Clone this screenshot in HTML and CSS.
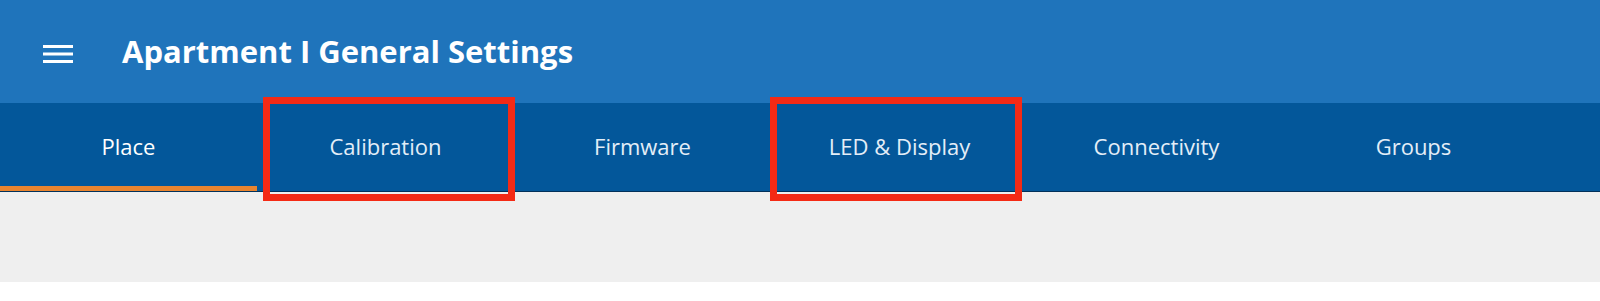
FILE: index.html
```html
<!DOCTYPE html>
<html lang="en">
<head>
<meta charset="utf-8">
<title>Apartment I General Settings</title>
<link rel="stylesheet" href="styles.css">
</head>
<body>
<header class="appbar">
  <svg class="menu" width="30" height="20" viewBox="0 0 30 20" aria-hidden="true">
    <rect x="0" y="1" width="30" height="3" fill="#fff"/>
    <rect x="0" y="8.5" width="30" height="3" fill="#fff"/>
    <rect x="0" y="16" width="30" height="3" fill="#fff"/>
  </svg>
  <h1 class="title">Apartment I General Settings</h1>
</header>
<nav class="tabs">
  <div class="tab active">Place</div>
  <div class="tab">Calibration<span class="mark mark-a"></span></div>
  <div class="tab">Firmware</div>
  <div class="tab">LED &amp; Display<span class="mark mark-b"></span></div>
  <div class="tab">Connectivity</div>
  <div class="tab">Groups</div>
</nav>
<main class="content"></main>
</body>
</html>
```
FILE: styles.css
```css
html, body {
  margin: 0;
  padding: 0;
  background: #ffffff;
  font-family: "Open Sans", Lato, sans-serif;
}
.appbar {
  height: 103px;
  background: #1f74bb;
  display: flex;
  align-items: center;
  padding-left: 43px;
  box-sizing: border-box;
}
.menu {
  display: block;
  flex: none;
  margin-top: 4px;
}
.title {
  margin: 0 0 2px 49px;
  color: #ffffff;
  font-size: 31px;
  font-weight: 700;
  letter-spacing: 0;
}
.tabs {
  height: 89px;
  background: #03579a;
  display: grid;
  grid-template-columns: repeat(6, 257px);
  border-bottom: 1px solid #02315a;
  box-sizing: border-box;
}
.tab {
  position: relative;
  display: flex;
  align-items: center;
  justify-content: center;
  color: #e3eef8;
  font-size: 22px;
  padding-bottom: 3px;
  box-sizing: border-box;
}
.tab.active {
  color: #ffffff;
  border-bottom: 5px solid #e8842f;
  padding-bottom: 0;
  padding-top: 2px;
}
.mark {
  position: absolute;
  top: -6px;
  height: 104px;
  width: 252px;
  border: 7px solid #f42a15;
  box-sizing: border-box;
}
.mark-a { left: 6px; }
.mark-b { left: -1px; }
.content {
  display: block;
  height: 90px;
  background: #efefef;
}
```
